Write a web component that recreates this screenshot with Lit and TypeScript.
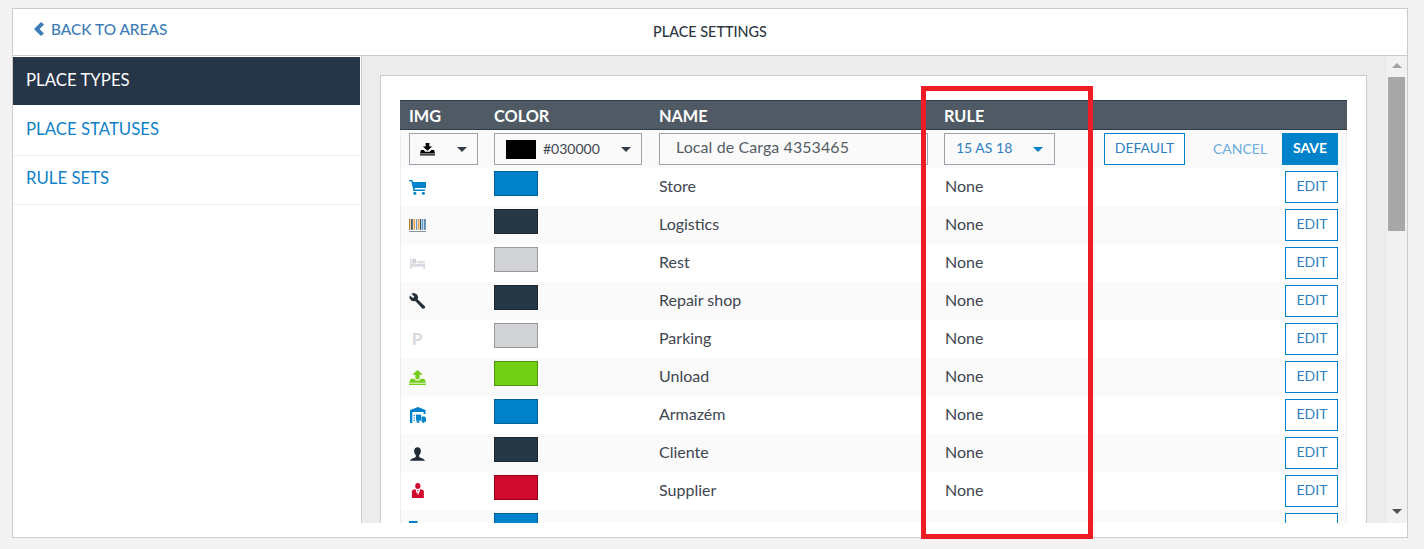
import { LitElement, html, css, svg } from "lit";
import { customElement } from "lit/decorators.js";

const I: Record<string, any> = {
  download: svg`<path fill="#000" d="M6 1h4v4h3L8 10 3 5h3z"/><path fill="#000" d="M1 9h3l1.500 2h5L12 9h3l1 4H0z"/><rect x="0" y="14" width="16" height="1.4" fill="#000"/>`,
  cart: svg`<path fill="#0082ca" d="M0 0h3.200l.6 2H16v6.600H5.200l.3 1.600H15v1.400H4.200L2.200 1.400H0z"/><circle cx="5.500" cy="14.300" r="1.500" fill="#0082ca"/><circle cx="13.500" cy="14.300" r="1.500" fill="#0082ca"/>`,
  barcode: svg`<rect x="0" y="0" width="1.200" height="11" fill="#b5791e"/><rect x="2" y="0" width="1.500" height="11" fill="#31424f"/><rect x="4.200" y="0" width="1.600" height="11" fill="#e9a24d"/><rect x="6.600" y="0" width="1" height="11" fill="#5b9bd0"/><rect x="8.200" y="0" width="1.600" height="11" fill="#e9a24d"/><rect x="10.400" y="0" width="1" height="11" fill="#31424f"/><rect x="12" y="0" width="1.500" height="11" fill="#5b9bd0"/><rect x="14.200" y="0" width="1.600" height="11" fill="#4d7fa8"/><rect x="0" y="12.200" width="16" height="1" fill="#8a94a0"/>`,
  bed: svg`<path fill="#d9dbe0" d="M0 2h1.600v6.600H16V14h-1.800v-2.400H1.800V14H0z"/><rect x="2.400" y="3" width="4" height="5" fill="#cfd2d8"/><path fill="#dfe1e5" d="M7 5h7.500a1.500 1.500 0 0 1 1.500 1.500V8H7z"/>`,
  wrench: svg`<path fill="#25303b" d="M5.200.2a4.400 4.400 0 0 0-3 .5L5 3.600 3.800 5.200 1 2.400A4.400 4.400 0 0 0 .6 5.600a4.300 4.300 0 0 0 5.300 2.300l6.400 7.300c.7.7 1.800.7 2.400.1.7-.7.7-1.700 0-2.400L8.100 6.300A4.400 4.400 0 0 0 5.200.2z"/>`,
  upload: svg`<path fill="#75cd1a" d="M8 0l5 5h-3v4.400H6V5H3z"/><path fill="#75cd1a" d="M1.600 9H5l1 1.800h4L11 9h3.400L16 13H0z"/><rect x="0" y="14" width="16" height="1.400" fill="#75cd1a"/>`,
  warehouse: svg`<path fill="#0082ca" d="M8 0l7.500 3v4H13.600V5H2.300v11H0V3z"/><rect x="3.600" y="8" width="1.200" height="1.200" fill="#0082ca"/><rect x="3.600" y="10.400" width="1.200" height="1.200" fill="#0082ca"/><rect x="3.600" y="12.800" width="1.200" height="1.200" fill="#0082ca"/><rect x="6" y="7.600" width="5" height="6" fill="#0082ca"/><path fill="#0082ca" d="M11.500 9.600H15l1 2v3h-4.500z"/><circle cx="8" cy="14.600" r="1.400" fill="#0082ca"/><circle cx="13.400" cy="14.600" r="1.400" fill="#0082ca"/>`,
  person: svg`<path fill="#1f2a35" d="M8 .2c2.200 0 3.600 1.700 3.600 4 0 1.900-.8 3.500-1.800 4.400v1.500c0 .8 1 1.200 2.400 1.800 1.500.6 3 1.200 3.800 2.800H0c.8-1.600 2.300-2.200 3.800-2.800 1.400-.6 2.400-1 2.400-1.800V8.600C5.200 7.700 4.400 6.100 4.400 4.200c0-2.300 1.400-4 3.600-4z"/>`,
  supplier: svg`<circle cx="7.800" cy="3" r="3" fill="#cf0a2c"/><path fill="#cf0a2c" d="M1 8.200c0-.6.4-1 1-1.200l3-.9 2.200 6 .6-3.600-.9-1.600h1.900l-.9 1.600.6 3.600 2.200-6 3 .9c.6.2 1 .6 1 1.200V15H1z"/>`,
  partial: svg`<rect x="0" y="0" width="8.500" height="16" fill="#0082ca"/>`,
};

const BLUE = { color: "#0082ca", border: "#00609a" };
const DARK = { color: "#263746", border: "#1a2733" };
const GREY = { color: "#d1d2d6", border: "#999" };

const ROWS = [
  { icon: "cart", w: 17, h: 15, vb: "0 0 16 16", x: 0, y: 12, ...BLUE, name: "Store" },
  { icon: "barcode", w: 17, h: 13, vb: "0 0 16 13.200", x: 0, y: 13, ...DARK, name: "Logistics" },
  { icon: "bed", w: 15, h: 11, vb: "0 2 16 12", x: 1, y: 14, ...GREY, name: "Rest" },
  { icon: "wrench", w: 17, h: 16, vb: "0 0 16 16", x: 0, y: 11, ...DARK, name: "Repair shop" },
  { icon: "P", w: 16, h: 16, vb: "", x: 0, y: 10, ...GREY, name: "Parking" },
  { icon: "upload", w: 17, h: 15, vb: "0 0 16 15.400", x: 0, y: 12, color: "#73ce16", border: "#4f9408", name: "Unload" },
  { icon: "warehouse", w: 16, h: 16, vb: "0 0 16 16", x: 1, y: 11, ...BLUE, name: "Armazém" },
  { icon: "person", w: 15, h: 14, vb: "0 0 16 15", x: 1, y: 13, ...DARK, name: "Cliente" },
  { icon: "supplier", w: 14, h: 15, vb: "0 0 16 15", x: 2, y: 11, color: "#cf0a2c", border: "#960020", name: "Supplier" },
  { icon: "partial", w: 16, h: 16, vb: "0 0 16 16", x: 0, y: 11, ...BLUE, name: "Sorocaba" },
];

@customElement("app-root")
export class AppRoot extends LitElement {
  static styles = css`
    :host { display: block; height: 549px; background: #f3f3f3; font-family: Lato, "Open Sans", sans-serif; color: #3c4650; padding: 8px 16px 0 12px; box-sizing: border-box; position: relative; overflow: hidden; }
    * { box-sizing: border-box; }
    .frame { height: 530px; border: 1px solid #ccc; background: #fff; display: flex; flex-direction: column; }
    .top { height: 47px; flex: none; border-bottom: 1px solid #ccc; display: grid; grid-template-columns: 1fr auto 1fr; align-items: center; }
    .back { display: flex; align-items: center; gap: 6px; color: #3e7cb7; font-size: 15.400px; padding-left: 20px; padding-bottom: 6px; }
    .back span { font-weight: 500; }
    .title { color: #2c3640; font-size: 14.400px; font-weight: 500; padding-bottom: 2px; }
    .body { height: 467px; flex: none; display: flex; overflow: hidden; }
    .side { width: 349px; flex: none; border-right: 1px solid #ccc; padding-top: 1px; }
    .side-item { height: 49px; border-bottom: 1px solid #eee; color: #0e82c9; font-size: 16.800px; padding: 0 13px 6px; display: flex; align-items: center; margin-right: 1px; }
    .side-item.active { height: 48px; background: #263547; color: #fff; border-bottom: 0; margin-bottom: 2px; padding-bottom: 4px; }
    .main { flex: 1; min-width: 0; background: #ececec; padding: 19px 0 0 18px; overflow: hidden; }
    .panel { width: 987px; height: 500px; background: #fff; border: 1px solid #ccc; padding: 24px 19px 0 19px; }
    .thead, .row { display: grid; }
    .thead { grid-template-columns: 94px 165px 285px 1fr; height: 30px; background: #4f5a65; border-top: 1px solid #2f3d4b; border-bottom: 1px solid #2f3d4b; color: #fff; font-weight: 700; font-size: 16.300px; align-items: center; line-height: 28px; padding-top: 1px; }
    .thead div:first-child { padding-left: 9px; }
    .tbody { border-left: 1px solid #eee; border-right: 1px solid #eee; }
    .row { grid-template-columns: 93px 165px 285px 1fr; height: 38px; align-items: center; background: #fff; }
    .row:nth-child(odd) { background: #fafafa; }
    .row.edit { background: #fafafa; align-items: start; }
    .cell-img { padding-left: 8px; height: 100%; }
    .cell-img svg { display: block; }
    .p { width: 16px; text-align: center; color: #d8dade; font-weight: 900; font-size: 17px; line-height: 18px; }
    .cell-color { align-self: start; }
    .swatch { width: 44px; height: 25px; border: 1px solid; margin-top: 3px; }
    .cell-text { font-size: 16px; color: #3e4650; }
    .lifted { padding-bottom: 4px; }
    .none { margin-left: 1px; }
    .cell-end { display: flex; justify-content: space-between; align-items: center; padding-right: 8px; }
    .btn { height: 32px; border: 1px solid #0082ca; background: #fff; color: #2f7fc0; font-size: 14px; display: flex; align-items: center; justify-content: center; padding-bottom: 3px; }
    .btn.edit-btn { width: 53px; padding-left: 1px; }
    .sel { height: 32px; margin-top: 3px; border: 1px solid #9ba3ad; display: flex; align-items: center; background: #fafafa; padding-bottom: 2px; }
    .sel.img { width: 69px; padding-left: 10px; padding-bottom: 0; }
    .sel.col { width: 148px; padding-left: 11px; color: #3e4650; font-size: 14px; padding-bottom: 0; }
    .sel.name { width: 269px; padding-left: 16px; font-size: 16px; color: #555d66; letter-spacing: 0.080px; padding-bottom: 6px; }
    .sel.rule { width: 111px; padding-left: 11px; color: #2f7fc0; font-size: 14px; margin-top: 0; padding-bottom: 4px; }
    .col-text { padding-bottom: 2px; }
    .black { width: 30px; height: 19px; background: #000; margin-right: 7px; }
    .caret { width: 0; height: 0; border-left: 5px solid transparent; border-right: 5px solid transparent; border-top: 5px solid #333d47; margin-left: auto; margin-right: 10px; }
    .caret.blue { border-top-color: #0082ca; margin-right: 11px; margin-top: 4px; }
    .actions { display: flex; align-items: center; margin-top: 3px; padding-right: 8px; }
    .actions .default { width: 81px; margin-left: 49px; }
    .cancel { color: #6eaede; font-size: 14px; margin-left: 28px; padding-bottom: 2px; }
    .save { width: 56px; height: 32px; margin-left: auto; background: #0082ca; color: #fff; font-size: 14px; font-weight: 700; display: flex; align-items: center; justify-content: center; padding-bottom: 3px; }
    .bar { width: 20px; flex: none; background: #f1f1f1; display: flex; flex-direction: column; align-items: center; }
    .arrow-up { margin-top: 7px; border-left: 5px solid transparent; border-right: 5px solid transparent; border-bottom: 5px solid #a3a3a3; }
    .thumb { width: 17px; height: 154px; margin-top: 9px; background: #a8a8a8; margin-right: 1px; }
    .arrow-down { margin-top: auto; margin-bottom: 9px; border-left: 5px solid transparent; border-right: 5px solid transparent; border-top: 5px solid #505050; }
    .highlight { position: absolute; left: 921px; top: 86px; width: 172px; height: 453px; border: 5px solid #ee1c25; pointer-events: none; }
  `;

  private icon(r: (typeof ROWS)[number]) {
    const pos = `margin-left:${r.x}px;padding-top:${r.y}px`;
    if (r.icon === "P") return html`<div class="p" style=${pos}>P</div>`;
    return html`<div style=${pos}><svg width=${r.w} height=${r.h} viewBox=${r.vb} preserveAspectRatio="none">${I[r.icon]}</svg></div>`;
  }

  render() {
    return html`
      <div class="frame">
        <div class="top">
          <div class="back">
            <svg width="12" height="14" viewBox="0 0 12 14"><path fill="#3e7cb7" d="M8 0l3 2.500L6.500 7 11 11.500 8 14 1 7z"/></svg>
            <span>BACK TO AREAS</span>
          </div>
          <div class="title">PLACE SETTINGS</div>
          <div></div>
        </div>
        <div class="body">
          <nav class="side">
            <div class="side-item active">PLACE TYPES</div>
            <div class="side-item">PLACE STATUSES</div>
            <div class="side-item">RULE SETS</div>
          </nav>
          <div class="main">
            <div class="panel">
              <div class="thead"><div>IMG</div><div>COLOR</div><div>NAME</div><div>RULE</div></div>
              <div class="tbody">
                <div class="row edit">
                  <div class="cell-img">
                    <div class="sel img">
                      <svg width="15" height="14" viewBox="0 0 16 16" preserveAspectRatio="none">${I.download}</svg>
                      <span class="caret"></span>
                    </div>
                  </div>
                  <div>
                    <div class="sel col"><span class="black"></span><span class="col-text">#030000</span><span class="caret"></span></div>
                  </div>
                  <div><div class="sel name">Local de Carga 4353465</div></div>
                  <div class="actions">
                    <div class="sel rule">15 AS 18<span class="caret blue"></span></div>
                    <div class="btn default">DEFAULT</div>
                    <div class="cancel">CANCEL</div>
                    <div class="save">SAVE</div>
                  </div>
                </div>
                ${ROWS.map(
                  (r) => html`<div class="row">
                    <div class="cell-img">${this.icon(r)}</div>
                    <div class="cell-color"><div class="swatch" style="background:${r.color};border-color:${r.border}"></div></div>
                    <div class="cell-text lifted">${r.name}</div>
                    <div class="cell-end cell-text">
                      <span class="lifted none">None</span>
                      <div class="btn edit-btn">EDIT</div>
                    </div>
                  </div>`
                )}
              </div>
            </div>
          </div>
          <div class="bar">
            <span class="arrow-up"></span>
            <div class="thumb"></div>
            <span class="arrow-down"></span>
          </div>
        </div>
      </div>
      <div class="highlight"></div>
    `;
  }
}
